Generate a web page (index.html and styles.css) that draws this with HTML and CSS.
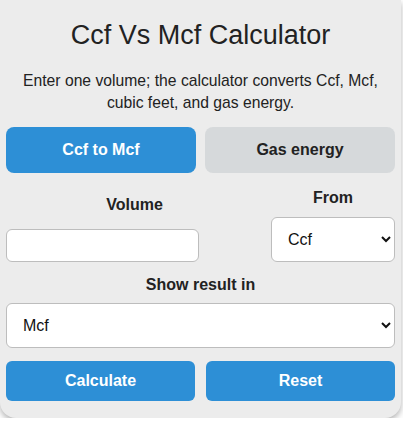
FILE: index.html
```html
<!DOCTYPE html>
<html>
	<head>
		<meta charset="utf-8">
		<title>Ccf Vs Mcf Calculator</title>
		<link rel="stylesheet" href="styles.css">
	</head>
	<body>
		<div class="card">
			<h1 class="title">Ccf Vs Mcf Calculator</h1>
			<p class="intro">Enter one volume; the calculator converts Ccf, Mcf, cubic feet, and gas energy.</p>
			<div class="tabs">
				<button type="button" class="tab active">Ccf to Mcf</button>
				<button type="button" class="tab">Gas energy</button>
			</div>
			<div class="row">
				<div class="field">
					<label class="label" for="volume">Volume</label>
					<input type="text" class="input" id="volume">
				</div>
				<div class="field from">
					<label class="label" for="from">From</label>
					<select class="select" id="from">
						<option>Ccf</option>
						<option>Mcf</option>
						<option>Cubic feet</option>
					</select>
				</div>
			</div>
			<div class="field result">
				<label class="label" for="to">Show result in</label>
				<select class="select" id="to">
					<option>Mcf</option>
					<option>Ccf</option>
					<option>Cubic feet</option>
				</select>
			</div>
			<div class="actions">
				<button type="button" class="btn">Calculate</button>
				<button type="button" class="btn">Reset</button>
			</div>
		</div>
	</body>
</html>
```

FILE: styles.css
```css
*{
	margin: 0;
	padding: 0;
	box-sizing: border-box;
}
body{
	background-color: #ffffff;
	font-family: "Liberation Sans", Arial, sans-serif;
	color: #222222;
}
.card{
	width: 401px;
	background-color: #ececec;
	border-radius: 0 0 16px 16px;
	box-shadow: 0 3px 6px rgba(0, 0, 0, 0.3);
	padding: 16px 6px 17px 6px;
}
.title{
	font-size: 27px;
	font-weight: normal;
	text-align: center;
	line-height: 38px;
}
.intro{
	font-size: 15.7px;
	line-height: 22px;
	text-align: center;
	margin: 16px 10px 13px;
}
.tabs{
	display: grid;
	grid-template-columns: 1fr 1fr;
	gap: 9px;
}
.tab{
	height: 46px;
	border: none;
	border-radius: 8px;
	background-color: #d6d9db;
	color: #222222;
	font-family: inherit;
	font-size: 16px;
	font-weight: bold;
}
.tab.active{
	background-color: #2d8fd6;
	color: #ffffff;
}
.row{
	display: grid;
	grid-template-columns: 257px 1fr;
	gap: 8px;
	align-items: end;
	margin-top: 16px;
}
.field{
	display: flex;
	flex-direction: column;
}
.label{
	font-size: 16px;
	font-weight: bold;
	text-align: center;
	line-height: 18px;
	margin-bottom: 15px;
}
.from .label{
	margin-bottom: 10px;
}
.input{
	width: 193px;
	height: 33px;
	border: 1px solid #bdbdbd;
	border-radius: 6px;
	background-color: #ffffff;
	font-family: inherit;
	font-size: 16px;
	padding: 0 10px;
}
.select{
	height: 45px;
	border: 1px solid #bdbdbd;
	border-radius: 6px;
	background-color: #ffffff;
	color: #111111;
	font-family: inherit;
	font-size: 16px;
	padding: 0 12px;
}
.result{
	margin-top: 14px;
}
.result .label{
	margin-bottom: 9px;
}
.actions{
	display: grid;
	grid-template-columns: 1fr 1fr;
	gap: 11px;
	margin-top: 13px;
}
.btn{
	height: 40px;
	border: none;
	border-radius: 6px;
	background-color: #2d8fd6;
	color: #ffffff;
	font-family: inherit;
	font-size: 16px;
	font-weight: bold;
}
```
